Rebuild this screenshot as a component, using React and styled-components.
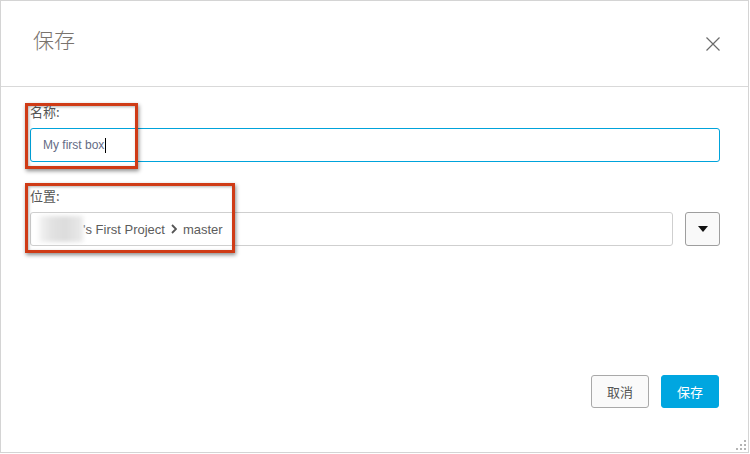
import React from "react"
import styled, { createGlobalStyle } from "styled-components"

const Global = createGlobalStyle`
  body {
    margin: 0;
    background: #fff;
    font-family: "Liberation Sans", Arial, "Noto Sans CJK SC", sans-serif;
  }
`

const Dialog = styled.div`
  position: relative;
  width: 747px;
  height: 451px;
  border: 1px solid #d4d4d4;
  background: #fff;
  display: flex;
  flex-direction: column;
`

const Header = styled.div`
  height: 85px;
  border-bottom: 1px solid #d9d9d9;
  display: flex;
  align-items: center;
  justify-content: space-between;
  padding: 0 27px 0 32px;
`

const Title = styled.h2`
  margin: 0 0 9px;
  font-size: 21px;
  color: #7a746e;
  font-family: "Noto Sans CJK SC", sans-serif;
  font-weight: 300;
`

const Close = styled.button`
  border: 0;
  background: none;
  padding: 0;
  width: 16px;
  height: 16px;
  display: flex;
  cursor: pointer;
`

const Body = styled.div`
  flex: 1;
  padding: 16px 28px 0 29px;
  display: flex;
  flex-direction: column;
`

const Field = styled.div`
  position: relative;
  margin-bottom: ${(p) => p.$gap || 0}px;
`

const Label = styled.div`
  font-size: 13px;
  color: #555;
  height: 17px;
  line-height: 17px;
  margin-bottom: 8px;
  font-family: "Noto Sans CJK SC", sans-serif;
`

const Row = styled.div`
  display: flex;
  gap: 12px;
`

const Input = styled.div`
  flex: 1;
  height: 32px;
  border: 1px solid ${(p) => (p.$focus ? "#00a3db" : "#cfcfcf")};
  border-radius: 3px;
  display: flex;
  align-items: center;
  padding: 0 12px;
  font-size: ${(p) => (p.$small ? 12 : 13)}px;
  color: ${(p) => (p.$focus ? "#646b85" : "#5c5c5c")};
`

const Caret = styled.span`
  display: inline-block;
  width: 1px;
  height: 15px;
  background: #000;
  margin-left: 1px;
`

const Blur = styled.span`
  display: inline-block;
  width: 44px;
  height: 26px;
  margin-left: -4px;
  background: linear-gradient(90deg, #f3f3f3, #e2e2e2 30%, #dcdcdc 60%, #eaeaea);
  filter: blur(2px);
`

const Chevron = styled.span`
  margin: 0 6px;
  display: inline-flex;
`

const DropButton = styled.button`
  width: 35px;
  height: 34px;
  border: 1px solid #9e9e9e;
  border-radius: 3px;
  background: #f9f9f9;
  display: flex;
  align-items: center;
  justify-content: center;
  padding: 0;
`

const Note = styled.div`
  position: absolute;
  box-sizing: border-box;
  left: ${(p) => p.$x}px;
  top: ${(p) => p.$y}px;
  width: ${(p) => p.$w}px;
  height: ${(p) => p.$h}px;
  border: 3px solid #cf3b16;
  box-shadow: 1px 2px 4px rgba(0, 0, 0, 0.45), inset 1px 1px 3px rgba(0, 0, 0, 0.3);
  pointer-events: none;
`

const Footer = styled.div`
  display: flex;
  justify-content: flex-end;
  gap: 12px;
  padding: 0 29px 44px 0;
`

const Button = styled.button`
  width: 58px;
  height: 33px;
  border-radius: 3px;
  font-size: 13px;
  font-family: "Noto Sans CJK SC", sans-serif;
  border: 1px solid ${(p) => (p.$primary ? "#00a6e0" : "#a9a9a9")};
  background: ${(p) => (p.$primary ? "#00a6e0" : "#fafafa")};
  color: ${(p) => (p.$primary ? "#fff" : "#555")};
`

const Grip = styled.div`
  position: absolute;
  right: 2px;
  bottom: 2px;
  width: 10px;
  height: 10px;
  display: grid;
  grid-template-columns: repeat(3, 2px);
  grid-template-rows: repeat(3, 2px);
  gap: 2px;
  span {
    background: #b4b4b4;
  }
`

const App = () => {
    return (
        <>
            <Global />
            <Dialog>
                <Header>
                    <Title>保存</Title>
                    <Close aria-label="close">
                        <svg width="16" height="16" viewBox="0 0 16 16">
                            <path d="M1.5 1.5 L14.5 14.5 M14.5 1.5 L1.5 14.5" stroke="#6b6b6b" strokeWidth="1.2" />
                        </svg>
                    </Close>
                </Header>

                <Body>
                    <Field $gap={25}>
                        <Label>名称:</Label>
                        <Row>
                            <Input $focus $small>
                                My first box<Caret />
                            </Input>
                        </Row>
                        <Note $x={-5} $y={0} $w={113} $h={66} />
                    </Field>

                    <Field>
                        <Label>位置:</Label>
                        <Row>
                            <Input>
                                <Blur />
                                's First Project
                                <Chevron>
                                    <svg width="6" height="10" viewBox="0 0 6 10">
                                        <path d="M1 1 L5 5 L1 9" fill="none" stroke="#555" strokeWidth="1.8" />
                                    </svg>
                                </Chevron>
                                master
                            </Input>
                            <DropButton aria-label="open">
                                <svg width="10" height="6" viewBox="0 0 10 6">
                                    <path d="M0 0 L10 0 L5 6 Z" fill="#111" />
                                </svg>
                            </DropButton>
                        </Row>
                        <Note $x={-5} $y={-4} $w={210} $h={70} />
                    </Field>
                </Body>

                <Footer>
                    <Button>取消</Button>
                    <Button $primary>保存</Button>
                </Footer>
                <Grip>
                    <span style={{ gridColumn: 3, gridRow: 1 }} />
                    <span style={{ gridColumn: 2, gridRow: 2 }} />
                    <span style={{ gridColumn: 3, gridRow: 2 }} />
                    <span style={{ gridColumn: 1, gridRow: 3 }} />
                    <span style={{ gridColumn: 2, gridRow: 3 }} />
                    <span style={{ gridColumn: 3, gridRow: 3 }} />
                </Grip>
            </Dialog>
        </>
    )
}

export default App
